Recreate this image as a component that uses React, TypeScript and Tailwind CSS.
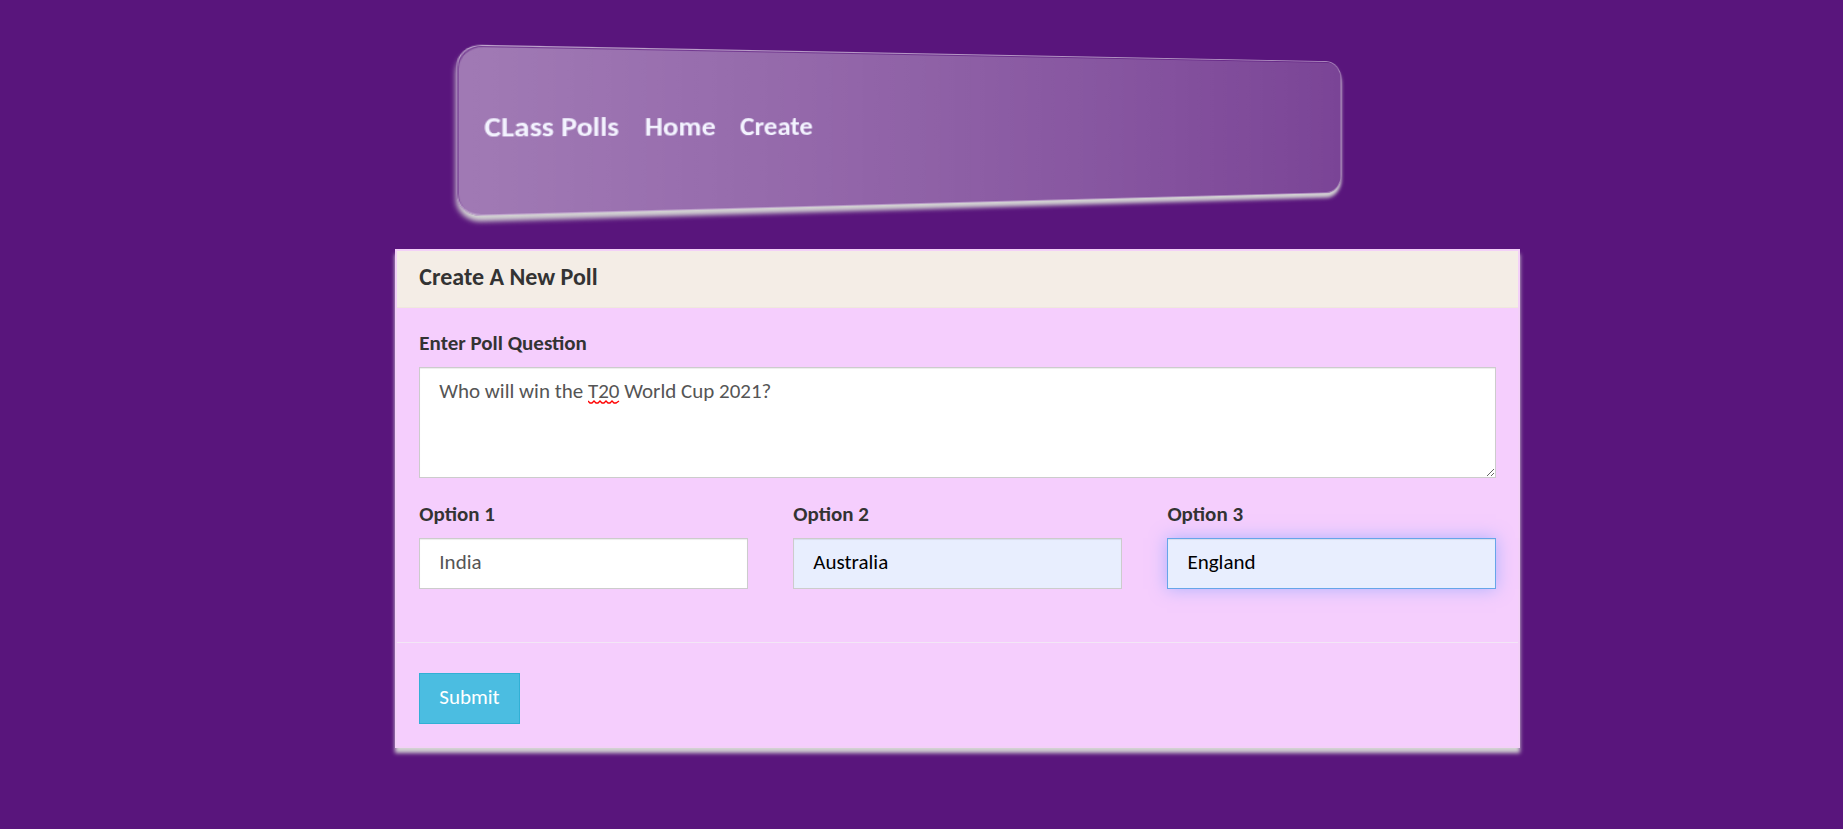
import { useState } from "react";

const links = [
  { href: "#home", text: "Home" },
  { href: "#create", text: "Create" },
];

type Option = { id: string; label: string; value: string; look: string };

const options: Option[] = [
  {
    id: "option1",
    label: "Option 1",
    value: "India",
    look: "border-[#cccccc] bg-white text-[#555555] shadow-[inset_0_1px_1px_rgba(0,0,0,0.075)]",
  },
  {
    id: "option2",
    label: "Option 2",
    value: "Australia",
    look: "border-[#cccccc] bg-[#e8eefe] text-black shadow-[inset_0_1px_1px_rgba(0,0,0,0.075)]",
  },
  {
    id: "option3",
    label: "Option 3",
    value: "England",
    look: "border-[#66a5e9] bg-[#e8eefe] text-black shadow-[inset_0_1px_1px_rgba(0,0,0,0.075),0_0_16px_rgba(102,153,255,0.5)]",
  },
];

function NavBar() {
  return (
    <nav className="mx-auto flex h-[149px] w-4/5 origin-[50%_42%] items-center gap-[22px] rounded-[20px] border border-white/35 bg-linear-to-r from-white/43 to-white/20 px-[21px] pb-[5px] font-bold text-[#f3f3ff] shadow-[0_5px_4px_lightgray,inset_1px_1px_0_rgba(89,21,124,0.6)] [transform:perspective(870px)_rotateY(15deg)]">
      <a href="#top" className="text-[25px] leading-8">
        CLass Polls
      </a>
      {links.map((link) => (
        <a key={link.href} href={link.href} className="text-[25px] leading-8">
          {link.text}
        </a>
      ))}
    </nav>
  );
}

function OptionField({ option }: { option: Option }) {
  const [value, setValue] = useState(option.value);
  return (
    <div className="flex min-w-0 flex-col gap-[10px]">
      <label htmlFor={option.id} className="leading-7 font-bold">
        {option.label}
      </label>
      <input
        id={option.id}
        type="text"
        value={value}
        onChange={(e) => setValue(e.target.value)}
        className={`h-[51px] w-full border px-[19px] pb-[3px] outline-none ${option.look}`}
      />
    </div>
  );
}

export default function App() {
  const [question, setQuestion] = useState("Who will win the T20 World Cup 2021?");
  return (
    <div className="min-h-screen bg-[#59157c] pt-[54px] pb-10 font-[Carlito,Calibri,Lato,sans-serif] text-[21px] text-[#333333]">
      <div className="ml-[21.45%] w-[61.05%]">
        <NavBar />
        <form
          onSubmit={(e) => e.preventDefault()}
          className="mt-[46px] border-2 border-[#f3d0f8] bg-[#f5cefd] shadow-[0_5px_4px_lightgray]"
        >
          <header className="border-b border-[#efe8dd] bg-[#f4ede6] px-[22px] pt-3 pb-4">
            <h1 className="text-[24px] leading-7 font-bold">Create A New Poll</h1>
          </header>
          <div className="flex flex-col gap-[22px] px-[22px] pt-[21px] pb-[53px]">
            <div className="flex flex-col gap-[10px]">
              <label htmlFor="question" className="leading-7 font-bold">
                Enter Poll Question
              </label>
              <div className="relative">
                <textarea
                  id="question"
                  spellCheck={false}
                  value={question}
                  onChange={(e) => setQuestion(e.target.value)}
                  className="block h-[111px] w-full resize-y border border-[#cccccc] bg-white px-[19px] py-[9px] leading-7 text-[#555555] shadow-[inset_0_1px_1px_rgba(0,0,0,0.075)] outline-none"
                />
                <svg
                  aria-hidden="true"
                  width="32"
                  height="4"
                  viewBox="0 0 32 4"
                  className="pointer-events-none absolute top-[33px] left-[169px]"
                >
                  <path
                    d="M0 1 L2 3 L4 3 L6 1 L8 3 L10 3 L12 1 L14 3 L16 3 L18 1 L20 3 L22 3 L24 1 L26 3 L28 3 L31 1"
                    fill="none"
                    stroke="#ff0000"
                    strokeWidth="1.3"
                  />
                </svg>
              </div>
            </div>
            <div className="grid grid-cols-3 gap-[45px]">
              {options.map((option) => (
                <OptionField key={option.id} option={option} />
              ))}
            </div>
          </div>
          <footer className="border-t border-[#f3e6f6] px-[22px] pt-[30px] pb-[22px]">
            <button
              type="submit"
              className="block h-[51px] border border-[#31b0d5] bg-[#4bbde1] px-[19px] pb-[2px] text-white"
            >
              Submit
            </button>
          </footer>
        </form>
      </div>
    </div>
  );
}
